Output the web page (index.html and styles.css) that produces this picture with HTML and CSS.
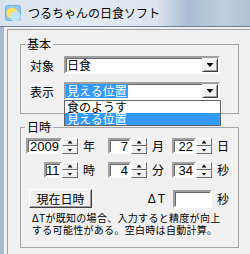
FILE: index.html
```html
<!DOCTYPE html>
<html lang="ja">
<head>
    <meta charset="UTF-8">
    <title>つるちゃんの日食ソフト</title>
    <link rel="stylesheet" href="styles.css">
</head>
<body>
    <div class="window">
        <div class="titlebar">
            <svg class="app-icon" width="16" height="16" viewBox="0 0 16 16">
                <rect x="0.5" y="0.5" width="15" height="15" rx="2" fill="#8ec8ee" stroke="#74b0dc"/>
                <circle cx="7" cy="8" r="5.5" fill="#ffe15c"/>
                <circle cx="10.5" cy="11.5" r="5.2" fill="#bfe1f7"/>
            </svg>
            <span class="title">つるちゃんの日食ソフト</span>
        </div>
        <div class="frame">
            <div class="panel">
                <fieldset class="group group-basic">
                    <legend>基本</legend>
                    <div class="field">
                        <span class="field-label">対象</span>
                        <div class="combo">
                            <span class="combo-text">日食</span>
                            <span class="combo-btn"></span>
                        </div>
                    </div>
                    <div class="field">
                        <span class="field-label">表示</span>
                        <div class="combo">
                            <span class="combo-text"><span class="selected">見える位置</span></span>
                            <span class="combo-btn"></span>
                            <!-- 開いたままのドロップダウン -->
                            <ul class="combo-list">
                                <li>食のようす</li>
                                <li class="active">見える位置</li>
                            </ul>
                        </div>
                    </div>
                </fieldset>

                <fieldset class="group group-time">
                    <legend>日時</legend>
                    <div class="date-grid">
                        <div class="spin-field"><input class="num w-year" value="2009" readonly><span class="spin"><span class="spin-up"></span><span class="spin-down"></span></span></div>
                        <span class="unit">年</span>
                        <div class="spin-field"><input class="num w-mid" value="7" readonly><span class="spin"><span class="spin-up"></span><span class="spin-down"></span></span></div>
                        <span class="unit">月</span>
                        <div class="spin-field"><input class="num w-day" value="22" readonly><span class="spin"><span class="spin-up"></span><span class="spin-down"></span></span></div>
                        <span class="unit">日</span>

                        <div class="spin-field"><input class="num w-small" value="11" readonly><span class="spin"><span class="spin-up"></span><span class="spin-down"></span></span></div>
                        <span class="unit">時</span>
                        <div class="spin-field"><input class="num w-mid" value="4" readonly><span class="spin"><span class="spin-up"></span><span class="spin-down"></span></span></div>
                        <span class="unit">分</span>
                        <div class="spin-field"><input class="num w-day" value="34" readonly><span class="spin"><span class="spin-up"></span><span class="spin-down"></span></span></div>
                        <span class="unit">秒</span>
                    </div>
                    <div class="button-row">
                        <button class="now-btn">現在日時</button>
                        <span class="dt-label">ΔT</span>
                        <input class="num dt-input" value="" readonly>
                        <span class="unit dt-unit">秒</span>
                    </div>
                    <p class="note">ΔTが既知の場合、入力すると精度が向上<br>する可能性がある。空白時は自動計算。</p>
                </fieldset>
            </div>
        </div>
    </div>
</body>
</html>
```

FILE: styles.css
```css
body { margin: 0; width: 250px; height: 254px; overflow: hidden; background: #f0f0f0; font-family: "Noto Sans CJK JP", sans-serif; font-size: 12px; color: #000; }
.window { width: 262px; height: 254px; display: flex; flex-direction: column; }

/* タイトルバー */
.titlebar { flex: none; height: 26px; display: flex; align-items: center; padding-left: 5px; border-bottom: 1px solid #6f8195;
    background: linear-gradient(to right, #d9e2ec 0%, #e4eaf1 35%, #dbe3ec 60%, #aabdd2 72%, #bfcedd 86%, #a6b9ce 100%); }
.app-icon { margin-right: 7px; }
.title { line-height: 26px; }

.frame { flex: 1; display: flex; border-left: 4px solid #a6bad0; padding: 2px 0 0 3px; }
.panel { flex: 1; border-top: 1px solid #a0a0a0; border-left: 1px solid #a0a0a0; padding: 7px 0 0 12px; }

/* グループボックス */
.group { box-sizing: border-box; width: 219px; margin: 0; padding: 0; border: 1px solid #a5a5a5; min-width: 0; }
.group legend { margin-left: 4px; padding: 0 2px; line-height: 14px; }
.group-basic { padding: 5px 0 13px; }
.group-time { margin-top: 6px; padding: 4px 0 10px; }

.field { display: flex; align-items: center; height: 18px; padding-left: 9px; }
.field + .field { margin-top: 8px; }
.field-label { width: 34px; }

.combo { position: relative; display: flex; box-sizing: border-box; width: 156px; height: 18px; background: #fff;
    border: 2px solid; border-color: #a0a0a0 #fff #fff #a0a0a0; box-shadow: inset 1px 1px 0 #696969; }
.combo-text { flex: 1; line-height: 14px; padding-left: 1px; }
.combo-text .selected { display: inline-block; background: #3399ff; color: #fff; margin-left: -1px; padding: 0 1px; }
.combo-btn { box-sizing: border-box; width: 16px; height: 14px; display: flex; align-items: center; justify-content: center; background: #f0f0f0;
    border: 1px solid; border-color: #f0f0f0 #404040 #404040 #f0f0f0; box-shadow: inset 1px 1px 0 #fff, inset -1px -1px 0 #a0a0a0; }
.combo-btn::after { content: ""; width: 7px; height: 4px; background: #000; clip-path: polygon(0 0, 100% 0, 50% 100%); }
.combo-list { position: absolute; z-index: 2; left: -2px; top: 16px; width: 157px; box-sizing: border-box; margin: 0; padding: 0; list-style: none; background: #fff; border: 1px solid #646464; }
.combo-list li { height: 12px; line-height: 12px; padding-left: 2px; }
.combo-list li.active { background: #3399ff; color: #fff; }

/* 日時 */
.date-grid { display: grid; grid-template-columns: 52px 30px 39px 25px 40px 1fr; row-gap: 8px; padding-left: 5px; }
.spin-field { display: flex; justify-content: flex-end; height: 16px; }
.unit { line-height: 16px; padding-left: 5px; }
.num { box-sizing: border-box; height: 16px; margin: 0; padding: 0 1px 0 0; background: #fff; text-align: right; outline: none;
    font: 13px "Liberation Sans", sans-serif; border: 2px solid; border-color: #a0a0a0 #fff #fff #a0a0a0; box-shadow: inset 1px 1px 0 #696969; }
.w-year { width: 36px; }
.w-small { width: 18px; }
.w-mid { width: 23px; }
.w-day { width: 24px; }

.spin { display: flex; flex-direction: column; width: 16px; height: 16px; }
.spin span { flex: 1; display: flex; align-items: center; justify-content: center; box-sizing: border-box; background: #f0f0f0;
    border: 1px solid; border-color: #fff #696969 #696969 #fff; }
.spin span::after { content: ""; width: 5px; height: 3px; background: #000; }
.spin-up::after { clip-path: polygon(50% 0, 100% 100%, 0 100%); }
.spin-down::after { clip-path: polygon(0 0, 100% 0, 50% 100%); }

.button-row { display: flex; align-items: center; height: 19px; margin-top: 11px; padding-left: 8px; }
.now-btn { box-sizing: border-box; width: 63px; height: 19px; padding: 0; background: #f0f0f0; font: 12px "Noto Sans CJK JP", sans-serif; color: #000;
    border: 1px solid; border-color: #fff #404040 #404040 #fff; box-shadow: inset -1px -1px 0 #a0a0a0; }
.dt-label { margin-left: auto; margin-right: 6px; font: 12px "Liberation Sans", sans-serif; letter-spacing: 2px; }
.dt-input { width: 39px; height: 18px; }
.dt-unit { line-height: 19px; width: 12px; padding-right: 9px; }

.note { margin: 5px 0 0; padding-left: 11px; font-family: "Liberation Sans", "Noto Sans CJK JP", sans-serif; font-size: 10px; line-height: 12px; letter-spacing: 0.3px; }
```
